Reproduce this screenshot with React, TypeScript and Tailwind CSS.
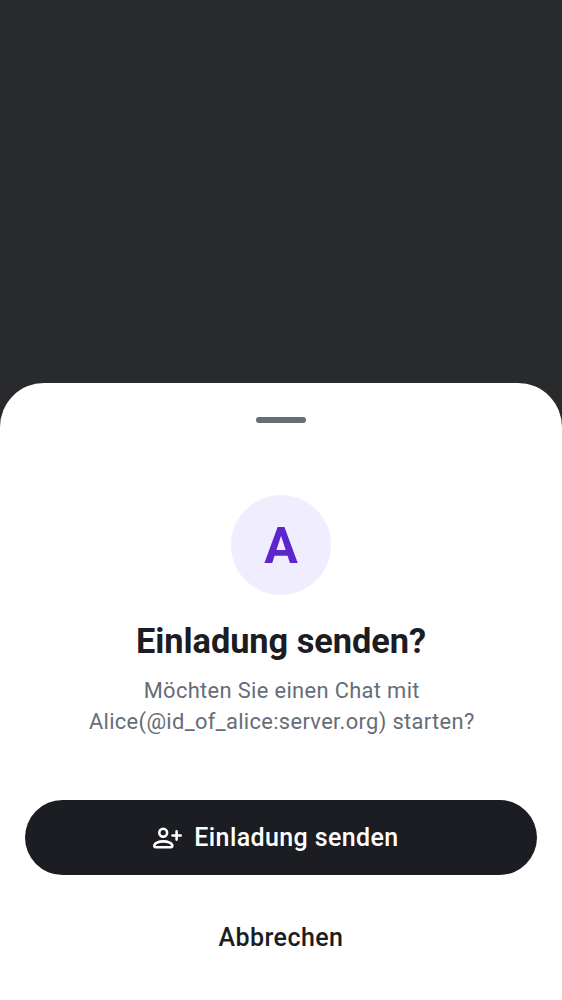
function InviteIcon() {
  return (
    <svg width="30" height="24" viewBox="0 0 30 24" fill="none" stroke="currentColor" strokeWidth="2.600" className="shrink-0">
      <circle cx="11.200" cy="6.700" r="3.900" />
      <path d="M2.300 19.800C2.300 17.100 6.500 15.400 11.300 15.400s9 1.700 9 4.400c0 .9-.6 1.400-1.500 1.400H3.800c-.9 0-1.500-.5-1.500-1.400Z" />
      <path d="M24.600 5.400v8.200M20.500 9.500h8.200" strokeLinecap="round" />
    </svg>
  );
}

export default function App() {
  return (
    <div className="flex h-[1000px] w-[562px] flex-col overflow-hidden bg-[#292a2c] pt-[383px] font-['Roboto',sans-serif]">
      <main className="flex flex-1 flex-col items-center rounded-t-[44px] bg-white px-[25px] pt-[34px] text-[#1b1d22]">
        <div className="h-[6.250px] w-[50px] rounded-full bg-[#656d77]" />
        <div className="mt-[72px] flex size-[100px] items-center justify-center rounded-full bg-[#f0edff] text-[50px] font-bold text-[#5d26cd]">
          <span className="pt-[2px]">A</span>
        </div>
        <h1 className="mt-[26px] text-[34.375px] leading-[40px] font-bold tracking-[-0.050px]">Einladung senden?</h1>
        <p className="mt-[13.750px] pl-[1.500px] text-center text-[21.875px] leading-[31.200px] tracking-[0.350px] text-[#656d77]">
          Möchten Sie einen Chat mit<br />Alice(@id_of_alice:server.org) starten?
        </p>
        <button className="mt-[62.600px] flex h-[75px] w-full shrink-0 items-center justify-center gap-[12px] rounded-full bg-[#1b1d22] pr-[11px] text-[25px] font-medium tracking-[0.390px] text-white">
          <InviteIcon />
          <span>Einladung senden</span>
        </button>
        <button className="mt-[25px] flex h-[75px] w-full shrink-0 items-center justify-center text-[25px] font-medium tracking-[0.450px]">Abbrechen</button>
      </main>
    </div>
  );
}
